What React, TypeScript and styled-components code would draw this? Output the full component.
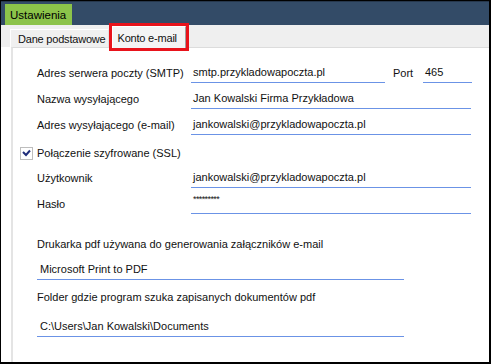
import React from 'react';
import styled, { createGlobalStyle } from 'styled-components';

const GlobalStyle = createGlobalStyle`
  html, body {
    margin: 0;
    padding: 0;
    background: #ffffff;
  }

  body {
    font-family: 'Liberation Sans', Arial, sans-serif;
    font-size: 11px;
    color: #111;
  }
`;

const Frame = styled.div`
  box-sizing: border-box;
  width: 491px;
  height: 364px;
  border: 1px solid #000;
  border-right-width: 2px;
  border-bottom-width: 2px;
  display: flex;
  flex-direction: column;
  background: #fff;
  overflow: hidden;
`;

const TopBar = styled.div`
  height: 24px;
  background: #334b67;
  border-top: 1px solid #26374c;
  box-sizing: border-box;
  display: flex;
  align-items: flex-end;
  padding-left: 4px;
`;

const ModuleTab = styled.div`
  height: 21px;
  padding: 0 6px 0 5px;
  background: #8cc34a;
  color: #000000;
  font-size: 11.5px;
  display: flex;
  align-items: center;
`;

const TabStrip = styled.div`
  height: 22px;
  background: #efefef;
  display: flex;
  align-items: flex-end;
  padding-left: 9px;
`;

const Tab = styled.div<{ $active?: boolean }>`
  box-sizing: border-box;
  position: relative;
  display: flex;
  align-items: center;
  height: ${({ $active }) => ($active ? '22px' : '18px')};
  margin-left: ${({ $active }) => ($active ? '3px' : '0')};
  padding: ${({ $active }) => ($active ? '0 8px 0 5px' : '1px 2px 0 7px')};
  background: ${({ $active }) => ($active ? '#f4f4f4' : '#f0f0f0')};
  border-left: 1px solid #ffffff;
  border-top: 1px solid #ffffff;
  border-right: 1px solid ${({ $active }) => ($active ? '#a0a0a0' : '#e0e0e0')};
  margin-bottom: ${({ $active }) => ($active ? '-1px' : '0')};
  outline: ${({ $active }) => ($active ? '3px solid #e8131b' : 'none')};
  z-index: ${({ $active }) => ($active ? 2 : 0)};
  letter-spacing: -0.2px;
  white-space: nowrap;
`;

const Panel = styled.div`
  flex: 1;
  margin-left: 10px;
  border-left: 2px solid #e4e4e4;
  border-top: 1px solid #dcdcdc;
  padding: 10px 0 0 24px;
  display: flex;
  flex-direction: column;
`;

const FieldRow = styled.div<{ $gap?: number }>`
  display: grid;
  grid-template-columns: 154px 1fr;
  width: 434px;
  height: 25px;
  margin-top: ${({ $gap }) => $gap ?? 1}px;
`;

const Label = styled.div`
  display: flex;
  align-items: flex-end;
  padding-bottom: 3px;
  line-height: 13px;
  white-space: nowrap;
`;

const Input = styled.div<{ $width?: number }>`
  box-sizing: border-box;
  width: ${({ $width }) => ($width ? `${$width}px` : 'auto')};
  border-bottom: 1px solid #6b93e6;
  display: flex;
  align-items: flex-end;
  padding: 0 0 3px 2px;
  line-height: 13px;
  white-space: nowrap;
`;

const InlineGroup = styled.div`
  display: flex;
  align-items: stretch;
`;

const PortLabel = styled(Label)`
  margin-left: 8px;
  width: 30px;
`;

const Password = styled.span`
  font-size: 9px;
  letter-spacing: -0.6px;
  line-height: 13px;
  position: relative;
  top: -4px;
`;

const CheckRow = styled.label`
  display: flex;
  align-items: center;
  gap: 4px;
  height: 16px;
  margin: 10px 0 2px -17px;
  line-height: 13px;
`;

const CheckBox = styled.span`
  box-sizing: border-box;
  width: 13px;
  height: 13px;
  border: 1px solid #bdbdbd;
  background: #fff;
  display: flex;
  align-items: center;
  justify-content: center;
`;

const Caption = styled.div<{ $top: number }>`
  margin-top: ${({ $top }) => $top}px;
  line-height: 13px;
`;

const WideInput = styled(Input)<{ $top: number }>`
  width: 367px;
  height: 25px;
  margin-top: ${({ $top }) => $top}px;
  padding-left: 3px;
`;

export default function App() {
  return (
    <>
      <GlobalStyle />
      <Frame>
        <TopBar>
          <ModuleTab>Ustawienia</ModuleTab>
        </TopBar>
        <TabStrip>
          <Tab>Dane podstawowe</Tab>
          <Tab $active>Konto e-mail</Tab>
        </TabStrip>
        <Panel>
          <FieldRow $gap={0}>
            <Label>Adres serwera poczty (SMTP)</Label>
            <InlineGroup>
              <Input $width={194}>smtp.przykladowapoczta.pl</Input>
              <PortLabel>Port</PortLabel>
              <Input $width={49}>465</Input>
            </InlineGroup>
          </FieldRow>
          <FieldRow>
            <Label>Nazwa wysyłającego</Label>
            <Input $width={280}>Jan Kowalski Firma Przykładowa</Input>
          </FieldRow>
          <FieldRow>
            <Label>Adres wysyłającego (e-mail)</Label>
            <Input $width={280}>jankowalski@przykladowapoczta.pl</Input>
          </FieldRow>

          <CheckRow>
            <CheckBox>
              <svg width="9" height="8" viewBox="0 0 9 8">
                <polyline points="1,3 4,6 8,1.5" fill="none" stroke="#1f2d7a" strokeWidth="2" />
              </svg>
            </CheckBox>
            Połączenie szyfrowane (SSL)
          </CheckRow>

          <FieldRow $gap={0}>
            <Label>Użytkownik</Label>
            <Input $width={280}>jankowalski@przykladowapoczta.pl</Input>
          </FieldRow>
          <FieldRow>
            <Label>Hasło</Label>
            <Input $width={280}>
              <Password>*********</Password>
            </Input>
          </FieldRow>

          <Caption $top={24}>Drukarka pdf używana do generowania załączników e-mail</Caption>
          <WideInput $top={4}>Microsoft Print to PDF</WideInput>
          <Caption $top={11}>Folder gdzie program szuka zapisanych dokumentów pdf</Caption>
          <WideInput $top={8}>C:\Users\Jan Kowalski\Documents</WideInput>
        </Panel>
      </Frame>
    </>
  );
}
